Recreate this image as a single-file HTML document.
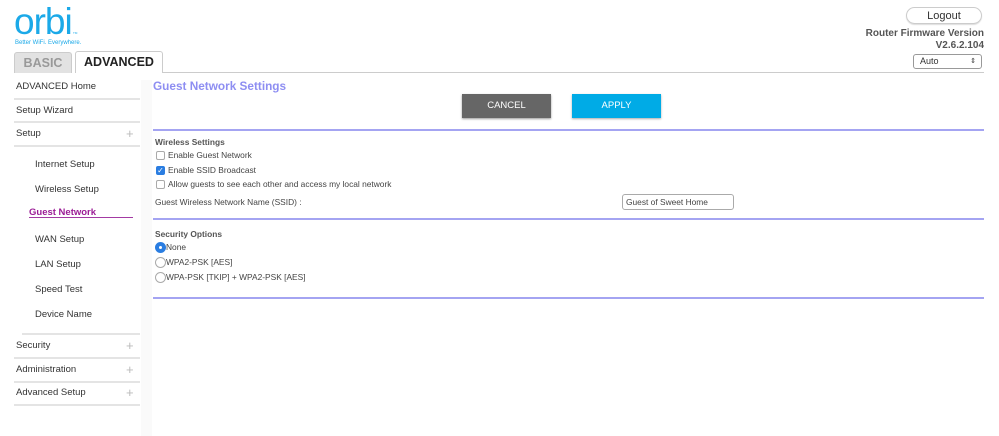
<!DOCTYPE html>
<html><head><meta charset="utf-8"><style>
*{margin:0;padding:0;box-sizing:border-box}
body{width:999px;height:436px;background:#fff;font-family:"Liberation Sans",Arial,sans-serif;position:relative;overflow:hidden;color:#333}
.a{position:absolute;white-space:nowrap}
.nav{font-size:9.5px;color:#333}
.hl{position:absolute;height:2px;background:#e4e4e4}
.plus{position:absolute;left:126px;font-size:13px;color:#bbb;font-weight:300}
.cb{position:absolute;left:156px;width:9px;height:9px;border:1px solid #aaa;border-radius:2px;background:#fff}
.rd{position:absolute;left:155px;width:11px;height:11px;border:1px solid #aaa;border-radius:50%;background:#fff}
.t9{font-size:8.4px;color:#444}
.pl{position:absolute;left:153px;width:831px;height:2px;background:#a4a4f2}
</style></head><body>
<div class="a" style="left:14px;top:1px;font-size:37px;color:#1ba9e8;letter-spacing:-1px;font-weight:300">orbi</div>
<div class="a" style="left:73px;top:31px;font-size:3px;color:#1ba9e8">TM</div>
<div class="a" style="left:15px;top:40px;font-size:6px;color:#1ba9e8">Better WiFi. Everywhere.</div>
<div class="a" style="left:14px;top:52px;width:58px;height:21px;background:#e2e2e2;border:1px solid #ccc;border-bottom:none;border-radius:3px 3px 0 0;font-size:12.5px;font-weight:bold;color:#999;text-align:center;line-height:20px">BASIC</div>
<div class="a" style="left:75px;top:51px;width:88px;height:22px;background:#fff;border:1px solid #ccc;border-bottom:none;border-radius:3px 3px 0 0;font-size:12.5px;font-weight:bold;color:#222;text-align:center;line-height:21px">ADVANCED</div>
<div class="a" style="left:162px;top:72px;width:822px;height:1px;background:#ccc"></div>
<div class="a" style="left:906px;top:7px;width:76px;height:17px;border:1px solid #ccc;border-radius:9px;font-size:11px;text-align:center;line-height:16px;color:#333;box-shadow:0 1px 1px #ddd">Logout</div>
<div class="a" style="right:15px;top:28px;font-size:10px;font-weight:bold;color:#555;text-align:right;line-height:12px">Router Firmware Version<br>V2.6.2.104</div>
<div class="a" style="left:913px;top:54px;width:69px;height:15px;border:1px solid #999;border-radius:3px;font-size:9px;line-height:13px;padding-left:6px;color:#333">Auto<span style="position:absolute;right:5px;font-size:7px">&#8661;</span></div>
<div class="a" style="left:141px;top:80px;width:11px;height:356px;background:#fafafa"></div>
<div class="a nav" style="left:16px;top:81px">ADVANCED Home</div><div class="hl" style="left:14px;top:98px;width:126px"></div>
<div class="a nav" style="left:16px;top:105px">Setup Wizard</div><div class="hl" style="left:14px;top:121px;width:126px"></div>
<div class="a nav" style="left:16px;top:128px">Setup</div><div class="plus" style="top:126px">+</div><div class="hl" style="left:14px;top:145px;width:126px"></div>
<div class="a nav" style="left:35px;top:159px">Internet Setup</div>
<div class="a nav" style="left:35px;top:184px">Wireless Setup</div>
<div class="a" style="left:29px;top:207px;font-size:9.5px;font-weight:bold;color:#9b1d96">Guest Network</div>
<div class="a" style="left:29px;top:217px;width:104px;height:1px;background:#a33aa3"></div>
<div class="a nav" style="left:35px;top:234px">WAN Setup</div>
<div class="a nav" style="left:35px;top:259px">LAN Setup</div>
<div class="a nav" style="left:35px;top:284px">Speed Test</div>
<div class="a nav" style="left:35px;top:309px">Device Name</div>
<div class="hl" style="left:22px;top:333px;width:118px"></div>
<div class="a nav" style="left:16px;top:340px">Security</div><div class="plus" style="top:338px">+</div><div class="hl" style="left:14px;top:357px;width:126px"></div>
<div class="a nav" style="left:16px;top:364px">Administration</div><div class="plus" style="top:362px">+</div><div class="hl" style="left:14px;top:381px;width:126px"></div>
<div class="a nav" style="left:16px;top:387px">Advanced Setup</div><div class="plus" style="top:385px">+</div><div class="hl" style="left:14px;top:404px;width:126px"></div>
<div class="a" style="left:153px;top:79px;font-size:11.8px;font-weight:bold;color:#8e8ef2">Guest Network Settings</div>
<div class="a" style="left:462px;top:94px;width:89px;height:24px;background:#666;color:#fff;font-size:9.5px;text-align:center;line-height:24px;box-shadow:0 1px 2px #999">CANCEL</div>
<div class="a" style="left:572px;top:94px;width:89px;height:24px;background:#00abe6;color:#fff;font-size:9.5px;text-align:center;line-height:24px;box-shadow:0 1px 2px #aaa">APPLY</div>
<div class="pl" style="top:129px"></div>
<div class="a t9" style="left:155px;top:137px;font-weight:bold;color:#555">Wireless Settings</div>
<div class="cb" style="top:151px"></div><div class="a t9" style="left:168px;top:150px">Enable Guest Network</div>
<div class="cb" style="top:166px;background:#2a7de1;border-color:#2a7de1;color:#fff;font-size:8px;line-height:7px;text-align:center">&#10003;</div><div class="a t9" style="left:168px;top:165px">Enable SSID Broadcast</div>
<div class="cb" style="top:180px"></div><div class="a t9" style="left:168px;top:179px">Allow guests to see each other and access my local network</div>
<div class="a t9" style="left:155px;top:197px">Guest Wireless Network Name (SSID) :</div>
<div class="a t9" style="left:622px;top:194px;width:112px;height:16px;border:1px solid #aaa;border-radius:3px;line-height:14px;padding-left:3px">Guest of Sweet Home</div>
<div class="pl" style="top:218px"></div>
<div class="a t9" style="left:155px;top:229px;font-weight:bold;color:#555">Security Options</div>
<div class="rd" style="top:242px;background:#2a7de1;border-color:#2a7de1"><div style="position:absolute;left:3px;top:3px;width:3px;height:3px;background:#fff;border-radius:50%"></div></div><div class="a t9" style="left:166px;top:242px">None</div>
<div class="rd" style="top:257px"></div><div class="a t9" style="left:166px;top:257px">WPA2-PSK [AES]</div>
<div class="rd" style="top:272px"></div><div class="a t9" style="left:166px;top:272px">WPA-PSK [TKIP] + WPA2-PSK [AES]</div>
<div class="pl" style="top:297px"></div>
</body></html>
